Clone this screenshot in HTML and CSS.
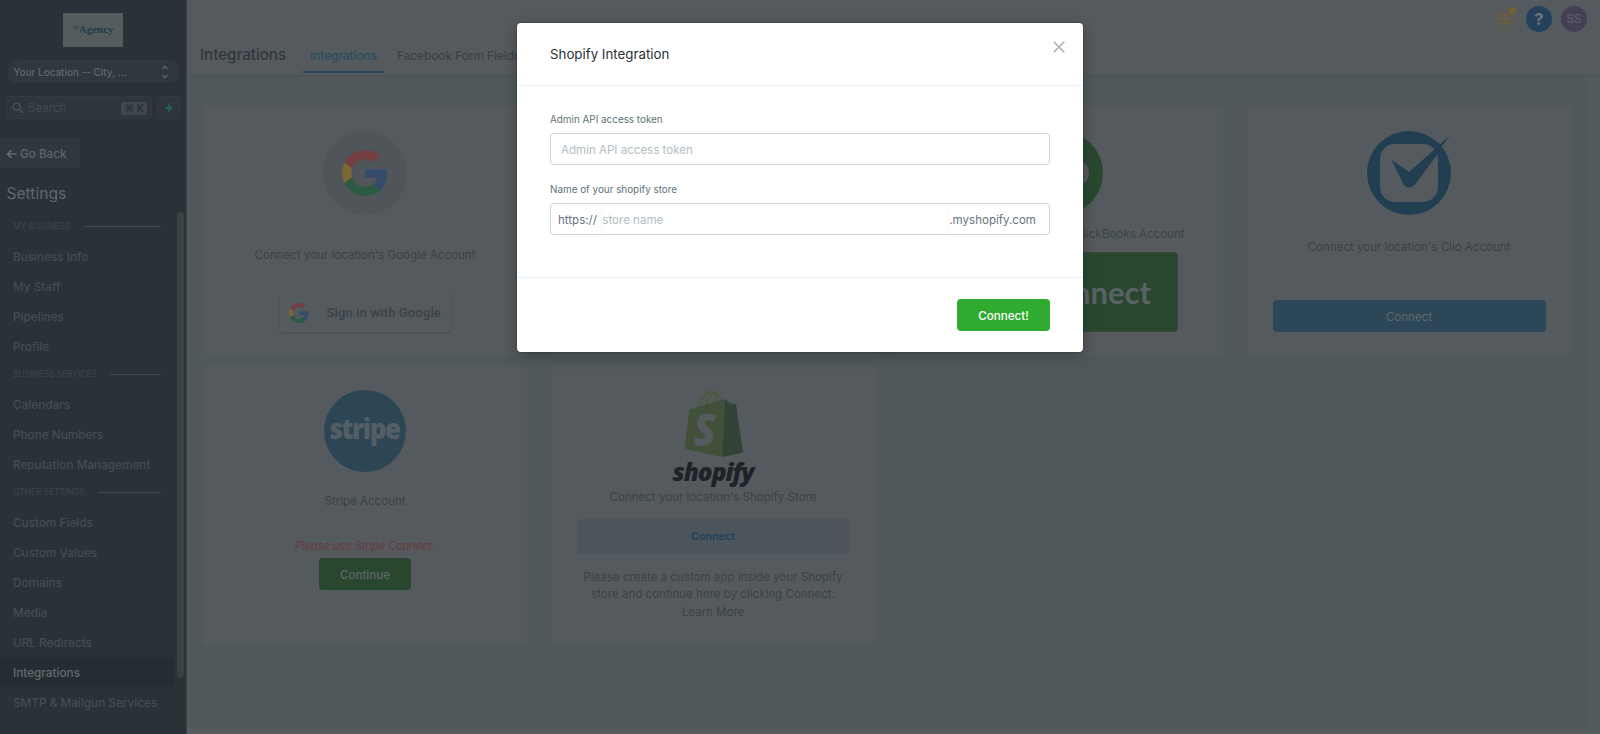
FILE: index.html
```html
<!DOCTYPE html>
<html lang="en">
<head>
  <meta charset="utf-8">
  <meta name="viewport" content="width=device-width, initial-scale=1">
  <title>Integrations</title>
  <link rel="stylesheet" href="styles.css">
</head>
<body>
  <svg width="0" height="0" class="defs">
    <symbol id="google" viewBox="0 0 48 48">
      <path fill="#743f41" d="M24 9.500c3.540 0 6.710 1.220 9.210 3.600l6.850-6.850C35.900 2.380 30.470 0 24 0 14.620 0 6.510 5.380 2.560 13.220l7.980 6.190C12.430 13.720 17.740 9.500 24 9.500z"/>
      <path fill="#344b6c" d="M46.980 24.550c0-1.570-.15-3.090-.38-4.550H24v9.020h12.940c-.58 2.960-2.260 5.480-4.780 7.180l7.730 6c4.510-4.180 7.090-10.360 7.090-17.650z"/>
      <path fill="#7a6735" d="M10.530 28.590c-.48-1.450-.76-2.990-.76-4.590s.27-3.140.76-4.590l-7.980-6.190C.92 16.460 0 20.120 0 24c0 3.880.92 7.540 2.560 10.780l7.970-6.190z"/>
      <path fill="#2c5a42" d="M24 48c6.480 0 11.930-2.130 15.890-5.810l-7.730-6c-2.150 1.450-4.920 2.300-8.160 2.300-6.260 0-11.570-4.220-13.470-9.910l-7.980 6.190C6.510 42.620 14.620 48 24 48z"/>
    </symbol>
  </svg>

  <div class="app">
    <aside class="sidebar">
      <div class="logo"><small>THE</small>Agency</div>
      <div class="location">
        <span>Your Location -- City, ...</span>
        <svg width="8" height="14" viewBox="0 0 8 14"><path d="M1.500 4 4 1.500 6.500 4M1.500 10 4 12.500 6.500 10" fill="none" stroke="#60676b" stroke-width="1.300"/></svg>
      </div>
      <div class="search-row">
        <div class="search">
          <svg width="12" height="12" viewBox="0 0 12 12"><g fill="none" stroke="#4d5458" stroke-width="1.300"><circle cx="4.700" cy="4.700" r="3.600"/><path d="M7.500 7.500 11 11"/></g></svg>
          <span>Search</span>
          <kbd>⌘ K</kbd>
        </div>
        <div class="bolt"><svg width="10" height="12" viewBox="0 0 10 12"><path d="M6.200.700.600 7h3.600l-.6 4.300L9.400 5H5.700z" fill="#27604f"/></svg></div>
      </div>
      <div class="back">
        <svg width="11" height="10" viewBox="0 0 11 10"><path d="M5.500 1 1.500 5l4 4M1.500 5h9" fill="none" stroke="#666c6f" stroke-width="1.700"/></svg>
        <span>Go Back</span>
      </div>
      <h2>Settings</h2>
      <nav>
        <h3>MY BUSINESS</h3>
        <a>Business Info</a>
        <a>My Staff</a>
        <a>Pipelines</a>
        <a>Profile</a>
        <h3>BUSINESS SERVICES</h3>
        <a>Calendars</a>
        <a>Phone Numbers</a>
        <a>Reputation Management</a>
        <h3>OTHER SETTINGS</h3>
        <a>Custom Fields</a>
        <a>Custom Values</a>
        <a>Domains</a>
        <a>Media</a>
        <a>URL Redirects</a>
        <a class="active">Integrations</a>
        <a>SMTP &amp; Mailgun Services</a>
        <div class="track"><div class="thumb"></div></div>
      </nav>
    </aside>

    <main>
      <header class="topbar">
        <h1>Integrations</h1>
        <div class="tab active">Integrations</div>
        <div class="tab">Facebook Form Fields</div>
        <div class="actions">
          <div class="round list">
            <svg width="12" height="12" viewBox="0 0 12 12"><g fill="#746033"><circle cx="1.300" cy="2" r="1.200"/><circle cx="1.300" cy="6" r="1.200"/><circle cx="1.300" cy="10" r="1.200"/><path d="M4 1.300h8v1.400H4zM4 5.300h8v1.400H4zM4 9.300h8v1.400H4z"/></g></svg>
            <i class="dot"></i>
          </div>
          <div class="round help">?</div>
          <div class="round user">SS</div>
        </div>
      </header>

      <div class="content">
        <div class="cards">
          <section class="card google">
            <div class="disc"><svg width="46" height="46"><use href="#google"/></svg></div>
            <p>Connect your location's Google Account</p>
            <div class="signin"><svg width="20" height="20"><use href="#google"/></svg><span>Sign in with Google</span></div>
          </section>
          <section class="card"></section>
          <section class="card quickbooks">
            <svg width="84" height="84" viewBox="0 0 84 84"><circle cx="42" cy="42" r="42" fill="#29472f"/><circle cx="57" cy="42" r="13" fill="#555a5e"/></svg>
            <p>Connect your location's QuickBooks Account</p>
            <div class="qb-button">Connect</div>
          </section>
          <section class="card clio">
            <svg width="84" height="84" viewBox="0 0 84 84">
              <circle cx="42" cy="42" r="42" fill="#213f50"/>
              <rect x="13" y="13" width="58" height="58" rx="15" fill="#555a5e"/>
              <path d="M24.500 28.700 42 41 68 18 83 4 74.500 16 70.700 23 48 53.500q-6 6-11.500 0z" fill="#213f50"/>
            </svg>
            <p>Connect your location's Clio Account</p>
            <div class="button">Connect</div>
          </section>
          <section class="card stripe">
            <svg width="82" height="82" viewBox="0 0 82 82">
              <circle cx="41" cy="41" r="41" fill="#2c4656"/>
              <text x="5.500" y="49" textLength="70" lengthAdjust="spacingAndGlyphs">stripe</text>
            </svg>
            <p>Stripe Account</p>
            <em>Please use Stripe Connect.</em>
            <div class="button">Continue</div>
          </section>
          <section class="card shopify">
            <svg width="60" height="68" viewBox="0 0 60 68">
              <g fill="none" stroke="#4a5b3b" stroke-width="2"><path d="M15.500 18C18 5 25 1 29 1.500c4 .5 5 6 4.500 12"/><path d="M23 16c1-8 5-12.500 9-12.500 3 0 5 2.500 6 6.500"/></g>
              <path d="M6.500 19.500 42 9l-2.500 58L1.500 59z" fill="#415038"/>
              <path d="M42 9l5 4.500 6 .5 7 48.500-20.500 4.500z" fill="#334236"/>
              <text x="10" y="56" textLength="23" lengthAdjust="spacingAndGlyphs">S</text>
            </svg>
            <div class="wordmark">shopify</div>
            <p>Connect your location's Shopify Store</p>
            <div class="button">Connect</div>
            <p class="note">Please create a custom app inside your Shopify<br>store and continue here by clicking Connect.<br>Learn More</p>
          </section>
        </div>
      </div>
    </main>
  </div>

  <div class="modal">
    <div class="modal-header">
      <span>Shopify Integration</span>
      <svg width="12" height="12" viewBox="0 0 12 12"><path d="M.7.700l10.600 10.600M11.300.700.7 11.300" stroke="#a3afb5" stroke-width="1.500"/></svg>
    </div>
    <div class="modal-body">
      <label>Admin API access token</label>
      <div class="field"><span class="placeholder">Admin API access token</span></div>
      <label>Name of your shopify store</label>
      <div class="field url">
        <span>https://</span>
        <div class="inner placeholder">store name</div>
        <span>.myshopify.com</span>
      </div>
    </div>
    <div class="modal-footer"><button>Connect!</button></div>
  </div>
</body>
</html>
```
FILE: styles.css
```css
* {
  box-sizing: border-box;
}
body {
  margin: 0;
  height: 734px;
  overflow: hidden;
  background: #50585b;
  color: #3a4247;
  font-family: Inter, sans-serif;
  font-size: 11.55px;
}
h1, h2, h3, p {
  margin: 0;
  font-weight: 400;
}
svg {
  display: block;
  flex: none;
  overflow: visible;
}
p, span, em, .tab, nav a, nav h3 {
  white-space: nowrap;
}
.defs {
  position: absolute;
}
.app {
  display: flex;
  height: 734px;
}

/* sidebar */
.sidebar {
  width: 187px;
  flex: none;
  background: #2a3138;
  border-right: 1px solid #3c4449;
  color: #454d51;
}
.logo {
  width: 60px;
  height: 34px;
  margin: 13px 0 0 63px;
  background: #545c5d;
  color: #203e4a;
  font: bold 11px/31px "Liberation Serif", serif;
  text-align: center;
}
.logo small {
  font-size: 3px;
  vertical-align: 4px;
}
.location {
  display: flex;
  align-items: center;
  justify-content: space-between;
  width: 173px;
  height: 23px;
  margin: 13px 0 0 7px;
  padding: 0 11px 0 6.5px;
  border-radius: 12px;
  background: #30373d;
  color: #62686b;
  font-size: 9.95px;
  font-weight: 500;
}
.location span {
  padding-top: 1px;
}
.search-row {
  display: flex;
  gap: 5px;
  margin: 13px 0 0 6px;
}
.search {
  display: flex;
  align-items: center;
  gap: 4px;
  width: 146px;
  height: 23px;
  padding: 1px 4px 0 5px;
  border: 1px solid #343b40;
  border-radius: 3px;
  background: #2e353b;
  color: #444c50;
}
.search kbd {
  width: 26px;
  height: 13px;
  margin-left: auto;
  border-radius: 2px;
  background: #41474c;
  color: #272e33;
  font: 500 10px/13px Inter, "DejaVu Sans", sans-serif;
  text-align: center;
}
.bolt {
  display: flex;
  align-items: center;
  justify-content: center;
  width: 23px;
  border: 1px solid #343b40;
  border-radius: 3px;
  background: #2e353b;
}
.back {
  display: flex;
  align-items: center;
  gap: 3px;
  width: 80px;
  height: 30px;
  margin-top: 19px;
  padding: 2px 0 0 6px;
  border-radius: 0 4px 4px 0;
  background: #30373d;
  color: #5f6669;
  font-size: 11.7px;
  font-weight: 500;
}
.sidebar h2 {
  height: 45px;
  padding-left: 6.5px;
  color: #62686b;
  font-size: 15.6px;
  line-height: 51px;
}
nav {
  position: relative;
}
nav h3 {
  display: flex;
  align-items: center;
  gap: 13px;
  width: 161px;
  height: 28px;
  padding: 0 0 2px 13px;
  color: #3e464b;
  font-size: 8.4px;
}
nav h3::after {
  content: "";
  flex: 1;
  height: 1px;
  margin-top: 1px;
  background: #434b4f;
}
nav a {
  display: block;
  width: 174px;
  height: 30px;
  padding-left: 13px;
  font-size: 11.75px;
  font-weight: 500;
  line-height: 32px;
}
nav a.active {
  border-radius: 4px;
  background: #252c32;
  color: #666c6f;
}
.track {
  position: absolute;
  top: -3px;
  right: 0;
  width: 11px;
  height: 521px;
  padding: 2px;
  background: #2c3134;
}
.thumb {
  height: 466px;
  border-radius: 4px;
  background: #3b4043;
}

/* header */
main {
  flex: 1;
  display: flex;
  flex-direction: column;
}
.topbar {
  display: flex;
  height: 76px;
  flex: none;
  padding: 0 13px;
  border-bottom: 1px solid #4b5154;
  background: #555a5e;
}
.topbar h1 {
  width: 103px;
  color: #2f373c;
  font-size: 15.1px;
  font-weight: 500;
  line-height: 109px;
}
.tab {
  height: 73px;
  margin-right: 6px;
  padding: 0 7px;
  font-size: 11.75px;
  font-weight: 500;
  line-height: 113px;
}
.tab.active {
  border-bottom: 2px solid #26485b;
  color: #2a4d61;
}
.actions {
  display: flex;
  gap: 9px;
  margin: 6px 0 0 auto;
}
.round {
  display: flex;
  align-items: center;
  justify-content: center;
  position: relative;
  width: 26px;
  height: 26px;
  border-radius: 50%;
}
.list {
  background: #5a5b59;
}
.dot {
  position: absolute;
  top: 1px;
  right: 1px;
  width: 7px;
  height: 7px;
  border-radius: 50%;
  background: #75602f;
}
.help {
  background: #24415b;
  color: #6b7277;
  font-size: 16px;
  font-weight: 800;
}
.user {
  background: #443f55;
  color: #686472;
}

/* cards */
.content {
  flex: 1;
  padding: 30px 0 0 16px;
  border-right: 12px solid #535a5d;
  border-bottom: 5px solid #565c60;
}
.cards {
  display: grid;
  grid-template-columns: repeat(4, 324px);
  grid-template-rows: 250px 280px;
  gap: 9px 24px;
}
.card {
  display: flex;
  flex-direction: column;
  align-items: center;
  padding-top: 25px;
  border-radius: 4px;
  background: #555a5e;
  line-height: 18px;
}
.disc {
  display: flex;
  align-items: center;
  justify-content: center;
  width: 84px;
  height: 84px;
  border-radius: 50%;
  background: #505559;
}
.google p {
  margin-top: 31px;
}
.signin {
  display: flex;
  align-items: center;
  gap: 18px;
  width: 171px;
  height: 39px;
  margin-top: 29px;
  padding-left: 9px;
  border-radius: 2px;
  box-shadow: 0 1px 2px #454b4f;
  font: 500 13px Roboto, sans-serif;
  letter-spacing: 0.14px;
}
.quickbooks p {
  margin-top: 10px;
}
.qb-button {
  width: 234px;
  height: 80px;
  margin-top: 9px;
  padding-right: 26px;
  border: 1px solid #35493a;
  border-radius: 4px;
  background: #29472f;
  color: #5b6265;
  font: 700 31px/78px Lato, sans-serif;
  text-align: right;
}
.clio p {
  margin-top: 23px;
}
.button {
  border-radius: 4px;
  color: #5f676b;
  text-align: center;
}
.clio .button {
  width: 273px;
  height: 32px;
  margin-top: 44px;
  background: #2c4757;
  line-height: 34px;
}
.stripe text {
  fill: #555e64;
  font: 800 28px "Open Sans", sans-serif;
  letter-spacing: -1.5px;
}
.stripe p {
  margin-top: 20px;
}
.stripe em {
  margin-top: 27px;
  color: #653c40;
  letter-spacing: -0.28px;
}
.stripe .button {
  width: 92px;
  height: 32px;
  margin-top: 3px;
  background: #29472f;
  font-weight: 500;
  line-height: 34px;
}
.shopify text {
  fill: #555a5e;
  font: italic 800 45px "Open Sans", sans-serif;
}
.wordmark {
  height: 31px;
  color: #1e2327;
  font: italic 800 24.5px/27px "Open Sans", sans-serif;
  letter-spacing: -1.1px;
}
.shopify p {
  line-height: 17.6px;
  text-align: center;
}
.shopify .button {
  width: 273px;
  height: 35px;
  margin-top: 12px;
  background: #4c545c;
  color: #20425f;
  font-size: 10.7px;
  font-weight: 600;
  line-height: 35px;
}
.shopify .note {
  margin-top: 15px;
}

/* modal */
.modal {
  position: absolute;
  top: 23px;
  left: 517px;
  width: 566px;
  height: 328.5px;
  border-radius: 4px;
  background: #fff;
  box-shadow: 0 4px 14px rgba(30, 36, 40, 0.4), 0 0 2px #2f363a;
  color: #607179;
}
.modal-header {
  display: flex;
  align-items: center;
  justify-content: space-between;
  height: 63px;
  padding: 0 18px 0 33px;
  border-bottom: 1px solid #e8f0f6;
  color: #2a3135;
  font-size: 13.3px;
}
.modal-header svg {
  margin-top: -14px;
}
.modal-body {
  height: 191px;
  padding: 26px 33px 0;
}
label {
  display: block;
  height: 21px;
  font-size: 9.9px;
  line-height: 15px;
}
.field {
  display: flex;
  align-items: center;
  height: 32px;
  margin-bottom: 17px;
  padding: 1px 10px 0;
  border: 1px solid #d0d4dc;
  border-radius: 4px;
}
.placeholder {
  color: #b3bec3;
}
.url {
  padding: 2px 13px 0 7px;
  color: #6b7280;
}
.inner {
  width: 348px;
  height: 28px;
  margin-left: auto;
  border: 1px solid #f9fafb;
  border-top: 0;
  border-radius: 4px;
  line-height: 28px;
}
.modal-footer {
  height: 74.5px;
  padding: 21px 33px;
  border-top: 1px solid #e8f0f6;
  text-align: right;
}
button {
  width: 93px;
  height: 32px;
  padding: 2px 0 0;
  border: 0;
  border-radius: 4px;
  background: #2fab2f;
  color: #fff;
  font: 500 11.6px Inter, sans-serif;
}
```
